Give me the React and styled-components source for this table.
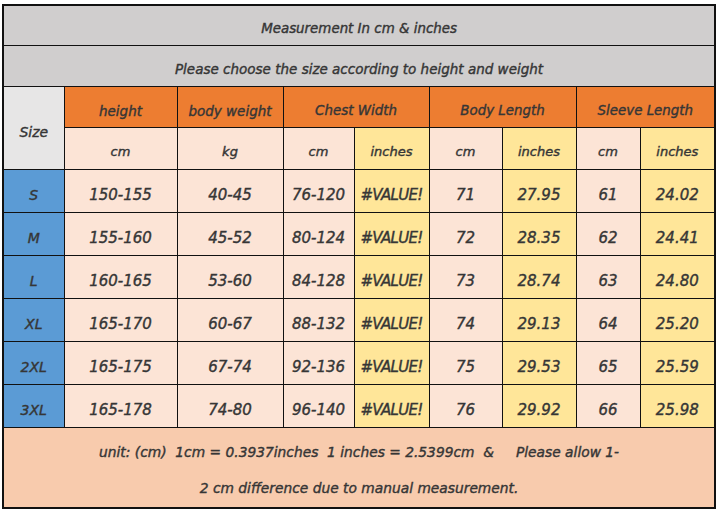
import React from 'react';
import styled, { createGlobalStyle } from 'styled-components';

const GlobalStyle = createGlobalStyle`
  html, body {
    margin: 0;
    padding: 0;
    background: #ffffff;
  }
`;

const Page = styled.div`
  padding: 4px 0 0 2px;
  width: 719px;
  height: 512px;
  box-sizing: border-box;
  font-family: "DejaVu Sans", "Liberation Sans", sans-serif;
  font-style: oblique;
  color: #363636;
  -webkit-text-stroke: 0.4px #363636;
`;

const Table = styled.table`
  width: 713px;
  border-collapse: collapse;
  table-layout: fixed;
  border: 2px solid #111;
`;

const Row = styled.tr`
  height: ${(p) => p.h}px;
`;

const bg = {
  gray: '#d0cece',
  orange: '#ed7d31',
  peach: '#fce4d6',
  yellow: '#ffe699',
  blue: '#5b9bd5',
  light: '#e7e6e6',
};

const Cell = styled.td`
  border: 1px solid #111;
  background: ${(p) => bg[p.tone] || bg.peach};
  text-align: center;
  vertical-align: middle;
  padding: ${(p) => p.pad || 9}px 0 0;
  font-size: ${(p) => p.size || 15}px;
  line-height: 16px;
  white-space: nowrap;
  overflow: hidden;
  letter-spacing: ${(p) => (p.tight ? '-0.7px' : '0')};
`;

const Footer = styled.td`
  border: 1px solid #111;
  background: #f8cbad;
  text-align: center;
  font-size: 13.8px;
  line-height: 36.5px;
  padding: 6px 0 0;
  white-space: pre;
`;

const widths = [61, 113, 106, 71, 75, 73, 74, 64, 75];

const rows = [
  ['S', '150-155', '40-45', '76-120', '71', '27.95', '61', '24.02'],
  ['M', '155-160', '45-52', '80-124', '72', '28.35', '62', '24.41'],
  ['L', '160-165', '53-60', '84-128', '73', '28.74', '63', '24.80'],
  ['XL', '165-170', '60-67', '88-132', '74', '29.13', '64', '25.20'],
  ['2XL', '165-175', '67-74', '92-136', '75', '29.53', '65', '25.59'],
  ['3XL', '165-178', '74-80', '96-140', '76', '29.92', '66', '25.98'],
];

const heads = ['Chest Width', 'Body Length', 'Sleeve Length'];

export default function App() {
  return (
    <Page>
      <GlobalStyle />
      <Table>
        <colgroup>
          {widths.map((w, i) => (
            <col key={i} style={{ width: w }} />
          ))}
        </colgroup>
        <tbody>
          <Row h={40}>
            <Cell tone="gray" size={13.4} pad={7} colSpan={9}>Measurement In cm &amp; inches</Cell>
          </Row>
          <Row h={41}>
            <Cell tone="gray" size={13.5} pad={7} colSpan={9}>Please choose the size according to height and weight</Cell>
          </Row>
          <Row h={41}>
            <Cell tone="light" size={14} pad={8} rowSpan={2}>Size</Cell>
            <Cell tone="orange" size={13.5} pad={8}>height</Cell>
            <Cell tone="orange" size={13.5} pad={8}>body weight</Cell>
            {heads.map((h) => (
              <Cell tone="orange" size={13.4} pad={8} colSpan={2} key={h}>{h}</Cell>
            ))}
          </Row>
          <Row h={42}>
            <Cell size={13} pad={8}>cm</Cell>
            <Cell size={13} pad={8}>kg</Cell>
            {heads.map((h) => (
              <React.Fragment key={h}>
                <Cell size={13} pad={8}>cm</Cell>
                <Cell size={13} pad={8} tone="yellow">inches</Cell>
              </React.Fragment>
            ))}
          </Row>
          {rows.map((r) => (
            <Row h={43} key={r[0]}>
              <Cell tone="blue" size={14}>{r[0]}</Cell>
              <Cell>{r[1]}</Cell>
              <Cell>{r[2]}</Cell>
              <Cell>{r[3]}</Cell>
              <Cell tone="yellow" tight>#VALUE!</Cell>
              <Cell>{r[4]}</Cell>
              <Cell tone="yellow">{r[5]}</Cell>
              <Cell>{r[6]}</Cell>
              <Cell tone="yellow">{r[7]}</Cell>
            </Row>
          ))}
          <Row h={79}>
            <Footer colSpan={9}>
              {'unit: (cm)  1cm = 0.3937inches  1 inches = 2.5399cm  &     Please allow 1-'}
              <br />
              {'2 cm difference due to manual measurement.'}
            </Footer>
          </Row>
        </tbody>
      </Table>
    </Page>
  );
}
